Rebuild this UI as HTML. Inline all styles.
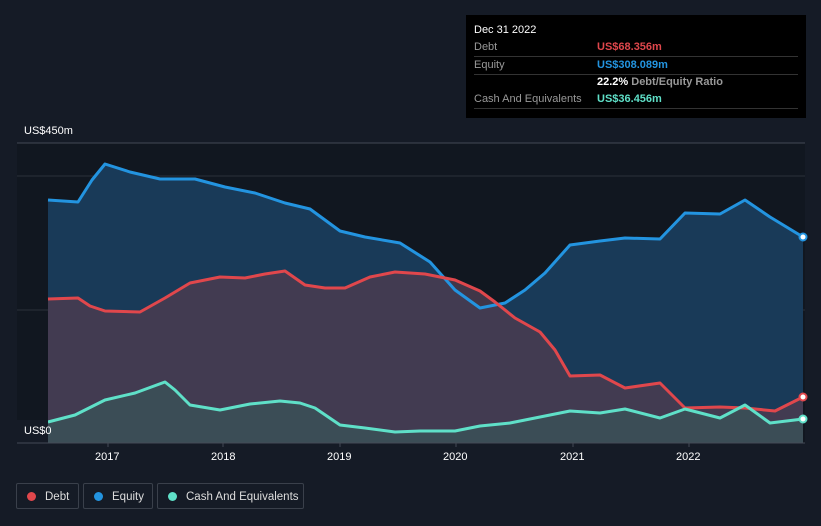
<!DOCTYPE html><html><head><style>
html,body{margin:0;width:821px;height:526px;overflow:hidden}
body{background:#151b26;font-family:"Liberation Sans",sans-serif;position:relative}
.t{position:absolute;color:#fff;font-size:11px}
.tip{position:absolute;left:466px;top:15px;width:340px;height:103px;background:#000;font-size:11px}
.row{position:absolute;left:8px;width:324px;border-bottom:1px solid #333;height:17px;line-height:17px;color:#999}
.row b{position:absolute;left:123px;font-weight:bold}
.leg{position:absolute;top:483px;height:26px;border:1px solid #3a404b;border-radius:2px;color:#ddd;font-size:11.5px;line-height:26px;box-sizing:border-box;white-space:nowrap}
.leg i{display:inline-block;width:9px;height:9px;border-radius:50%;margin:0 9px 0 10px;vertical-align:-1px}
</style></head><body>
<svg width="821" height="526" style="position:absolute;left:0;top:0">
<rect x="17" y="143" width="788" height="300" fill="#111720"/>
<line x1="17" y1="143" x2="805" y2="143" stroke="#444a55"/>
<line x1="17" y1="176" x2="805" y2="176" stroke="#2b303a"/>
<line x1="17" y1="310" x2="805" y2="310" stroke="#2b303a"/>
<path d="M48,200 L78,202 L92,180 L105,164 L130,172 L160,179 L195,179 L225,187 L255,193 L285,203 L310,209 L325,220 L340,231 L365,237 L400,243 L430,262 L455,290 L480,308 L505,303 L525,290 L545,273 L570,245 L600,241 L625,238 L660,239 L685,213 L720,214 L745,200 L770,217 L803,237 L803,443 L48,443Z" fill="#193a58"/>
<path d="M48,299 L78,298 L90,306 L105,311 L140,312 L165,298 L190,283 L220,277 L245,278 L265,274 L285,271 L305,285 L325,288 L345,288 L370,277 L395,272 L425,274 L455,280 L480,291 L495,302 L515,318 L540,332 L555,350 L570,376 L600,375 L625,388 L660,383 L685,408 L720,407 L745,408 L775,411 L803,397 L803,443 L48,443Z" fill="#4a3c50" fill-opacity="0.85"/>
<path d="M48,422 L75,415 L105,400 L135,393 L165,382 L175,390 L190,405 L220,410 L250,404 L280,401 L300,403 L315,408 L340,425 L365,428 L395,432 L420,431 L455,431 L480,426 L510,423 L540,417 L570,411 L600,413 L625,409 L660,418 L685,409 L720,418 L745,405 L770,423 L803,419 L803,443 L48,443Z" fill="#3a5258" fill-opacity="0.8"/>
<g fill="none" stroke-width="3" stroke-linejoin="round">
<path d="M48,200 L78,202 L92,180 L105,164 L130,172 L160,179 L195,179 L225,187 L255,193 L285,203 L310,209 L325,220 L340,231 L365,237 L400,243 L430,262 L455,290 L480,308 L505,303 L525,290 L545,273 L570,245 L600,241 L625,238 L660,239 L685,213 L720,214 L745,200 L770,217 L803,237" stroke="#2394e0"/>
<path d="M48,299 L78,298 L90,306 L105,311 L140,312 L165,298 L190,283 L220,277 L245,278 L265,274 L285,271 L305,285 L325,288 L345,288 L370,277 L395,272 L425,274 L455,280 L480,291 L495,302 L515,318 L540,332 L555,350 L570,376 L600,375 L625,388 L660,383 L685,408 L720,407 L745,408 L775,411 L803,397" stroke="#e0474c"/>
<path d="M48,422 L75,415 L105,400 L135,393 L165,382 L175,390 L190,405 L220,410 L250,404 L280,401 L300,403 L315,408 L340,425 L365,428 L395,432 L420,431 L455,431 L480,426 L510,423 L540,417 L570,411 L600,413 L625,409 L660,418 L685,409 L720,418 L745,405 L770,423 L803,419" stroke="#5fe0c8"/>
</g>
<circle cx="803" cy="237" r="3.5" fill="#fff" stroke="#2394e0" stroke-width="2"/>
<circle cx="803" cy="397" r="3.5" fill="#fff" stroke="#e0474c" stroke-width="2"/>
<circle cx="803" cy="419" r="3.5" fill="#fff" stroke="#5fe0c8" stroke-width="2"/>
<rect x="17" y="420" width="31" height="23" fill="#151b26"/>
<line x1="17" y1="443" x2="805" y2="443" stroke="#444a55"/>
<g stroke="#444a55"><line x1="108" y1="443" x2="108" y2="447"/><line x1="223" y1="443" x2="223" y2="447"/><line x1="340" y1="443" x2="340" y2="447"/><line x1="456" y1="443" x2="456" y2="447"/><line x1="573" y1="443" x2="573" y2="447"/><line x1="689" y1="443" x2="689" y2="447"/></g>
</svg>
<div class="t" style="left:24px;top:125px">US$450m</div>
<div class="t" style="left:24px;top:425px">US$0</div>
<div class="t" style="left:95px;top:451px">2017</div>
<div class="t" style="left:211px;top:451px">2018</div>
<div class="t" style="left:327px;top:451px">2019</div>
<div class="t" style="left:443px;top:451px">2020</div>
<div class="t" style="left:560px;top:451px">2021</div>
<div class="t" style="left:676px;top:451px">2022</div>
<div class="tip">
<div style="position:absolute;left:8px;top:9px;color:#fff">Dec 31 2022</div>
<div class="row" style="top:24px">Debt<b style="color:#e0474c">US$68.356m</b></div>
<div class="row" style="top:42px">Equity<b style="color:#2394e0">US$308.089m</b></div>
<div class="row" style="top:59px;border:none"><b style="color:#fff">22.2% <span style="color:#999">Debt/Equity Ratio</span></b></div>
<div class="row" style="top:76px">Cash And Equivalents<b style="color:#5fe0c8">US$36.456m</b></div>
</div>
<div class="leg" style="left:16px;width:63px"><i style="background:#e0474c"></i>Debt</div>
<div class="leg" style="left:83px;width:70px"><i style="background:#2394e0"></i>Equity</div>
<div class="leg" style="left:157px;width:147px"><i style="background:#5fe0c8"></i>Cash And Equivalents</div>
</body></html>
